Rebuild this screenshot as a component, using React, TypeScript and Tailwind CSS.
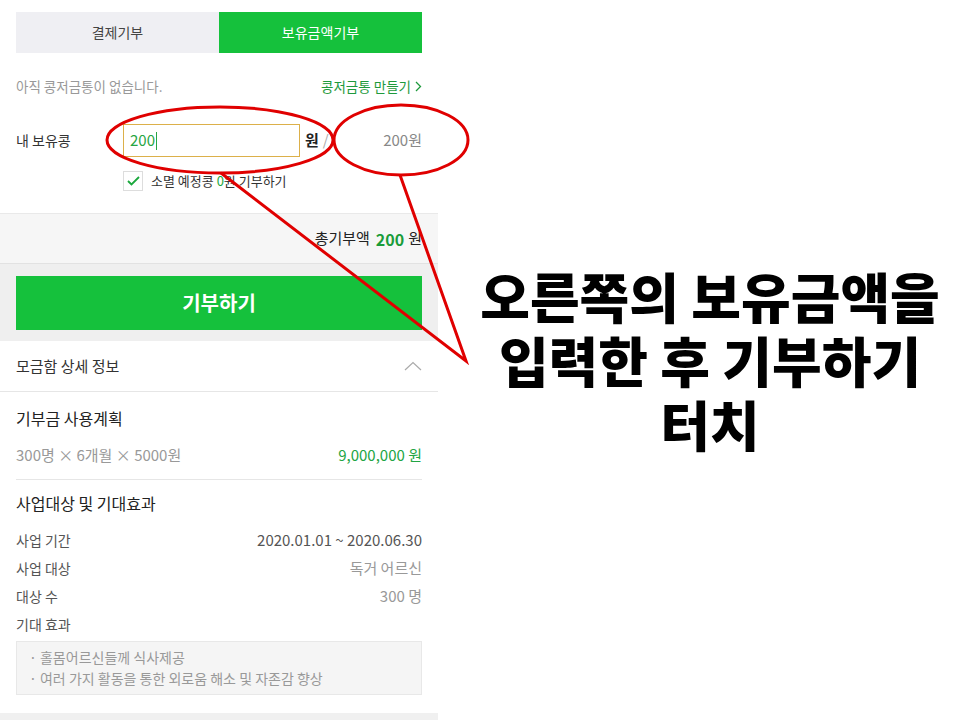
import React from "react";

const font = { fontFamily: '"Noto Sans CJK KR", "Noto Sans", sans-serif' };

function InfoRow({ label, value, dark }: { label: string; value: string; dark?: boolean }) {
    return (
        <div className="flex h-7 items-center justify-between">
            <span className="text-[14px] text-[#555]">{label}</span>
            <span className={dark ? "text-[15px] text-[#555]" : "text-[15px] text-[#999]"}>{value}</span>
        </div>
    );
}

export default function App() {
    return (
        <div className="relative flex h-[720px] w-[960px] overflow-hidden bg-white" style={font}>
            {/* phone screenshot (left) */}
            <div className="flex w-[438px] shrink-0 flex-col">
                <div className="px-4 pt-3">
                    <div className="flex h-[41px] text-[14px]">
                        <div className="flex flex-1 items-center justify-center bg-[#efeff3] text-[#444]">결제기부</div>
                        <div className="flex flex-1 items-center justify-center bg-[#15c13c] text-white">보유금액기부</div>
                    </div>

                    <div className="mt-[22px] flex h-[22px] items-center justify-between text-[13.5px]">
                        <span className="text-[#999]">아직 콩저금통이 없습니다.</span>
                        <span className="flex items-center gap-1 text-[#1e9a3c]">
                            콩저금통 만들기
                            <svg width="7" height="11" viewBox="0 0 7 11" fill="none">
                                <path d="M1 1l4.5 4.5L1 10" stroke="#1e9a3c" strokeWidth="1.3" />
                            </svg>
                        </span>
                    </div>

                    <div className="mt-[27px] flex h-[33px] items-center">
                        <span className="w-[107px] text-[14px] text-[#333]">내 보유콩</span>
                        <div className="flex h-full w-[177px] items-center border border-[#dcb04a] px-1.5 text-[15px] text-[#27a543]">
                            200<span className="ml-px h-[18px] w-px bg-[#27a543]" />
                        </div>
                        <span className="ml-[5px] text-[15px] font-bold text-[#222]">원</span>
                        <span className="ml-1 text-[15px] text-[#aaa]">/</span>
                        <span className="ml-auto text-[15px] text-[#888]">200원</span>
                    </div>

                    <div className="mt-[14px] flex h-5 items-center pl-[107px]">
                        <div className="flex h-5 w-5 items-center justify-center border border-[#ddd] bg-white">
                            <svg width="13" height="10" viewBox="0 0 13 10" fill="none">
                                <path d="M1 5l3.5 3.5L12 1" stroke="#1aa83c" strokeWidth="1.8" />
                            </svg>
                        </div>
                        <span className="ml-2 text-[13px] text-[#333]">
                            소멸 예정콩 <span className="text-[#1aa83c]">0</span>원 기부하기
                        </span>
                    </div>
                </div>

                <div className="mt-[22px] flex h-[50px] items-center justify-end border-t border-[#e9e9e9] bg-[#f6f6f6] px-4 text-[15px] text-[#222]">
                    총기부액 <span className="ml-1.5 mr-1 text-[16px] font-bold text-[#1a9c3a]">200</span>원
                </div>

                <div className="border-t border-[#e2e2e2] bg-[#efefef] px-4 pb-[11px] pt-3">
                    <button className="flex h-[54px] w-full items-center justify-center bg-[#15c13c] text-[20px] font-bold text-white">
                        기부하기
                    </button>
                </div>

                <div className="flex h-[51px] items-center justify-between border-b border-[#e6e6e6] px-4">
                    <span className="text-[15px] text-[#333]">모금함 상세 정보</span>
                    <svg width="18" height="10" viewBox="0 0 18 10" fill="none">
                        <path d="M1 9l8-7.5L17 9" stroke="#aaa" strokeWidth="1.2" />
                    </svg>
                </div>

                <div className="px-4">
                    <div className="mt-[14px] flex h-6 items-center text-[16px] text-[#222]">기부금 사용계획</div>
                    <div className="mt-[13px] flex h-6 items-center justify-between text-[15px]">
                        <span className="text-[#999]">300명 × 6개월 × 5000원</span>
                        <span className="text-[#22a544]">9,000,000 원</span>
                    </div>
                    <div className="mt-3 h-px bg-[#e6e6e6]" />
                    <div className="mt-[11px] flex h-6 items-center text-[16px] text-[#222]">사업대상 및 기대효과</div>
                    <div className="mt-[11px]">
                        <InfoRow label="사업 기간" value="2020.01.01 ~ 2020.06.30" dark />
                        <InfoRow label="사업 대상" value="독거 어르신" />
                        <InfoRow label="대상 수" value="300 명" />
                        <div className="flex h-7 items-center text-[14px] text-[#555]">기대 효과</div>
                    </div>
                    <div className="mt-[3px] h-[54px] border border-[#e8e8e8] bg-[#f5f5f5] px-3 pt-[5px] text-[14px] leading-[21px] text-[#999]">
                        <div>· 홀몸어르신들께 식사제공</div>
                        <div>· 여러 가지 활동을 통한 외로움 해소 및 자존감 향상</div>
                    </div>
                </div>
                <div className="mt-[18px] flex-1 bg-[#f0f0f0]" />
            </div>

            {/* instruction text (right) */}
            <div className="flex flex-1 justify-center pl-[22px] pt-[264px]">
                <div className="flex flex-col items-center whitespace-nowrap text-[54px] font-black leading-[64px] text-black">
                    <div className="h-16">오른쪽의 보유금액을</div>
                    <div className="h-16">입력한 후 기부하기</div>
                    <div className="h-16">터치</div>
                </div>
            </div>

            {/* red annotations */}
            <svg className="pointer-events-none absolute left-0 top-0" width="960" height="720" viewBox="0 0 960 720" fill="none">
                <ellipse cx="220" cy="140" rx="113" ry="33" stroke="#e00000" strokeWidth="3" />
                <ellipse cx="401" cy="140" rx="67" ry="35" stroke="#e00000" strokeWidth="3" />
                <path d="M221 173L466 361L400 175" stroke="#e00000" strokeWidth="3" strokeLinejoin="miter" />
            </svg>
        </div>
    );
}
